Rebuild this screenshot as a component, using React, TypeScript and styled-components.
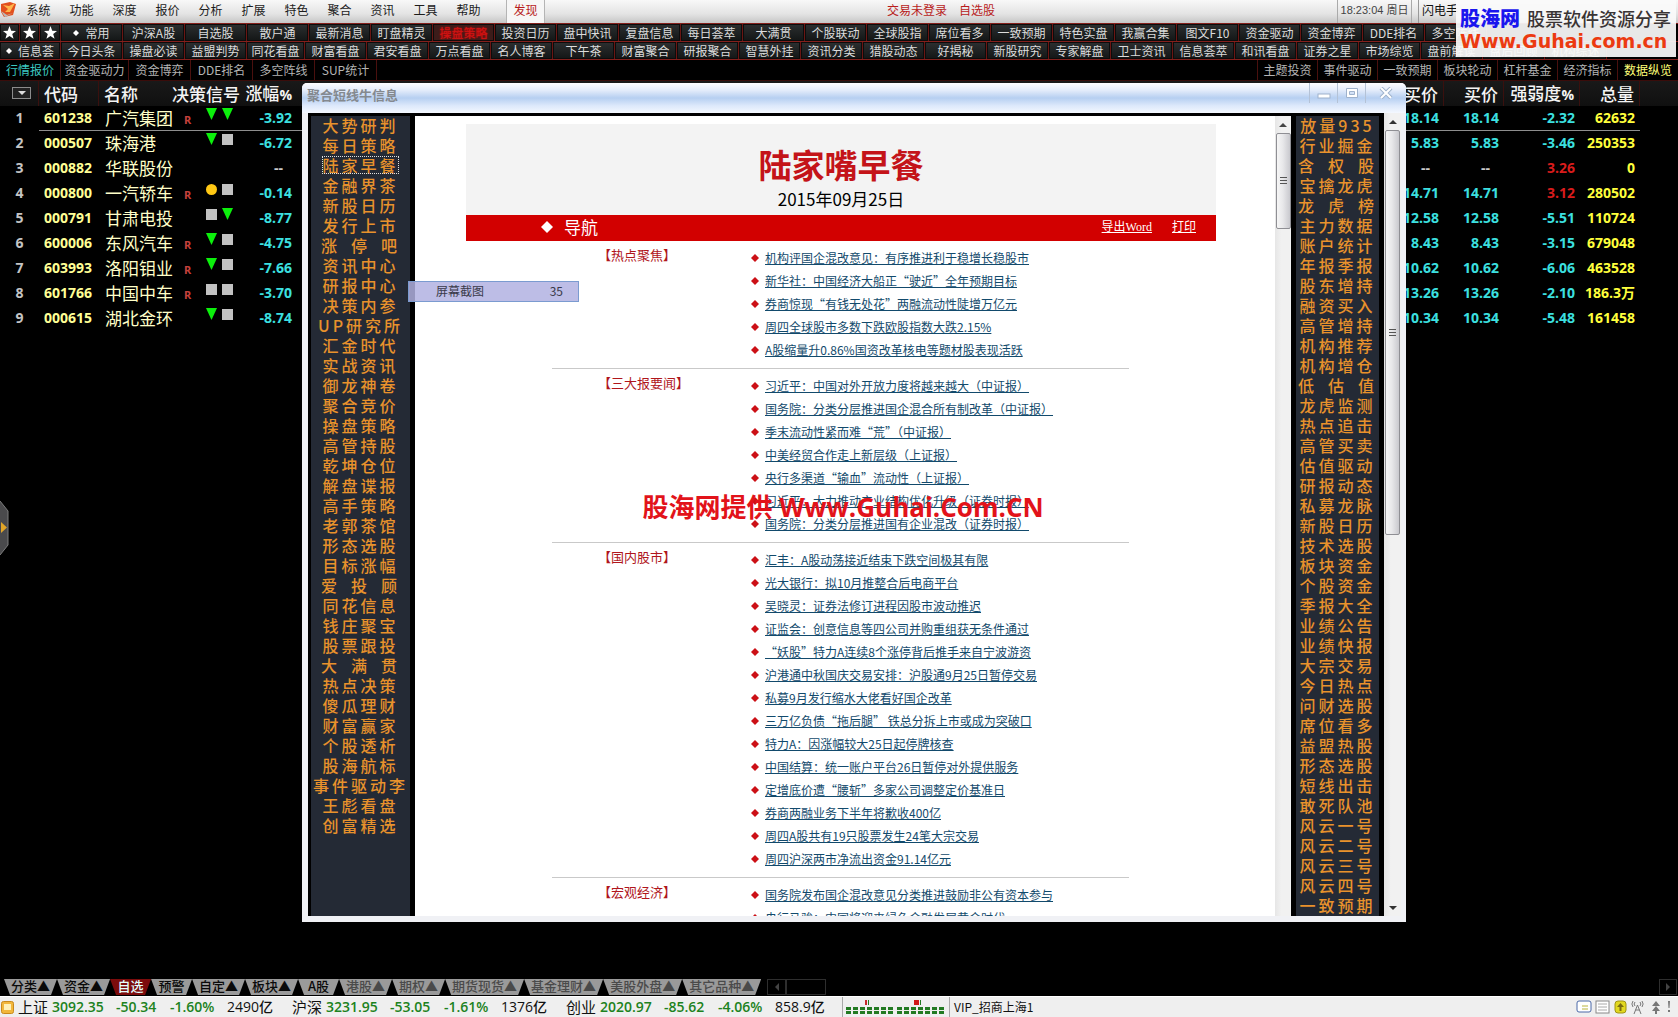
import React from "react";
import styled, { createGlobalStyle, css } from "styled-components";

const UI_FONT = '"Noto Sans CJK SC", "Liberation Sans", sans-serif';
const NUM_FONT = '"Open Sans", "Noto Sans CJK SC", sans-serif';

const GlobalStyle = createGlobalStyle`
  *, *::before, *::after { box-sizing: border-box; }
  body { margin: 0; background: #000; font-family: ${UI_FONT}; font-size: 12px; }
  button { margin: 0; padding: 0; border: 0; background: none; color: inherit; font: inherit; cursor: pointer; white-space: nowrap; }
  ul { list-style: none; margin: 0; padding: 0; }
  h1, h2, p { margin: 0; font-weight: 400; }
`;

const Page = styled.div`
  position: relative;
  display: flex;
  flex-direction: column;
  height: 100vh;
  min-width: 1280px;
  overflow: hidden;
  background: #000;
`;

/* ---------- top menu ---------- */

const MenuBar = styled.header`
  display: flex;
  align-items: stretch;
  height: 23px;
  flex: none;
  background: linear-gradient(#f8f8f8, #e4e4e4 60%, #c6c6c6);
  color: #1c1c1c;
`;
const AppIcon = styled.svg`
  width: 17px;
  height: 20px;
  flex: none;
`;
const MenuItem = styled.button`
  width: 43px;
  line-height: 18px;
  padding-bottom: 3px;
`;
const Discover = styled.button`
  width: 39px;
  margin-left: 16px;
  padding-bottom: 3px;
  line-height: 18px;
  color: #b81c1c;
  background: #f6f6f6;
  border: solid #b4b4b4;
  border-width: 0 1px;
`;
const AccountInfo = styled.div`
  flex: 1;
  display: flex;
  justify-content: center;
  gap: 12px;
  line-height: 20px;
  color: #b81c1c;
`;
const Clock = styled.time`
  width: 75px;
  border: solid #aaa;
  border-width: 0 1px;
  text-align: center;
  line-height: 20px;
  font-size: 11px;
  font-family: "Liberation Sans", "Noto Sans CJK SC", sans-serif;
  color: #444;
  white-space: nowrap;
`;
const QuickTrade = styled.button`
  width: 260px;
  margin-left: 6px;
  padding: 0 0 3px 3px;
  border-left: 1px solid #999;
  line-height: 18px;
  text-align: left;
  color: #111;
`;

/* ---------- toolbars ---------- */

const ToolRow = styled.nav`
  display: flex;
  flex: none;
  height: 18px;
  overflow: hidden;
  border-top: 1px solid #84201c;
  background: #000;
`;
const ToolCell = styled.button<{ $w?: number; $hot?: boolean }>`
  display: flex;
  align-items: center;
  justify-content: center;
  gap: 6px;
  flex: none;
  width: ${(p) => p.$w ?? 62}px;
  height: 17px;
  line-height: 17px;
  color: #dcdcdc;
  background: linear-gradient(#2c2f30, #131616);
  border: solid #6a1613;
  border-width: 0 1px 0 0;
  box-shadow: inset 0 0 0 1px #0c0c0c;
  ${(p) =>
    p.$hot &&
    css`
      color: #d01414;
      background: #3c1c1a;
      text-shadow: 0 0 2px #f00;
    `}
`;
const TabStrip = styled.div`
  display: flex;
  justify-content: space-between;
  flex: none;
  height: 22px;
  border-top: 1px solid #84201c;
  border-bottom: 1px solid #3a0c0a;
`;
const TabGroup = styled.nav<{ $end?: boolean }>`
  display: flex;
  ${(p) => p.$end && "border-left: 1px solid #4a100e;"}
`;
const StripTab = styled.button<{ $w: number; $color?: string }>`
  width: ${(p) => p.$w}px;
  line-height: 20px;
  color: ${(p) => p.$color ?? "#b4b4b4"};
  border-right: 1px solid #4a100e;
  &:last-child { border-right-width: ${(p) => (p.$color ? 0 : 1)}px; }
`;

/* ---------- quote table ---------- */

const Main = styled.main`
  position: relative;
  flex: 1;
  min-height: 0;
`;
const Quotes = styled.table`
  width: 100%;
  table-layout: fixed;
  border-collapse: separate;
  border-spacing: 0;
`;
const Head = styled.th<{ $align?: string; $line?: boolean }>`
  height: 25px;
  padding: 0 5px;
  background: linear-gradient(#191919, #101010);
  border-right: ${(p) => (p.$line ? "1px solid #3a100e" : "0")};
  font: 500 17px/24px ${UI_FONT};
  color: #f4f4f4;
  text-align: ${(p) => p.$align ?? "left"};
  white-space: nowrap;
`;
const Percent = styled.span`
  font: 700 14px/22px ${NUM_FONT};
`;
const SortButton = styled.button`
  display: flex;
  align-items: center;
  justify-content: center;
  width: 19px;
  height: 12px;
  margin: 0 0 2px 7px;
  border: 1px solid #8c8c8c;
  background: #222;
`;
const QuoteRow = styled.tr<{ $selected?: boolean }>`
  height: 25px;
  td { border-bottom: 1px solid transparent; }
  ${(p) => p.$selected && "td:not(:first-child):not(:last-child) { border-bottom-color: #8e8e8e; }"}
`;
const Cell = styled.td<{ $color: string; $align?: string; $empty?: boolean }>`
  padding: 0 ${(p) => (p.$empty ? 14 : 5)}px 0 5px;
  height: 25px;
  font: 700 14px/24px ${NUM_FONT};
  color: ${(p) => p.$color};
  text-align: ${(p) => p.$align ?? "left"};
  white-space: nowrap;
`;
const NameCell = styled(Cell)`
  padding-left: 6px;
  font: 400 17px/24px ${UI_FONT};
`;
const Signals = styled.div`
  display: flex;
  gap: 5px;
  padding-left: 7px;
  height: 24px;
`;
const Mark = styled.span`
  width: 17px;
  padding-top: 4px;
  font: 700 11px/20px ${NUM_FONT};
  color: #c8403c;
`;
const SignalIcon = styled.svg`
  width: 11px;
  height: 12px;
  margin-top: 2px;
`;

/* ---------- floating window ---------- */

const Window = styled.section`
  position: absolute;
  top: 2px;
  left: 302px;
  right: 272px;
  bottom: 56px;
  display: flex;
  flex-direction: column;
  padding: 0 5px 6px 6px;
  border-radius: 5px 5px 0 0;
  background: #f0f1f5;
`;
const TitleBar = styled.header`
  display: flex;
  justify-content: space-between;
  flex: none;
  height: 30px;
  margin: 0 -5px 0 -6px;
  padding: 0 0 0 5px;
  border-radius: 5px 5px 0 0;
  background: linear-gradient(#fdfdff, #e2ebfa 25%, #b6cff1 50%, #dce8fb 75%, #f4f8ff);
`;
const WindowTitle = styled.h2`
  font: 700 13px/24px ${UI_FONT};
  color: #84898f;
`;
const WindowButtons = styled.div`
  display: flex;
`;
const WindowButton = styled.button`
  display: flex;
  align-items: center;
  justify-content: center;
  width: 28px;
  height: 20px;
  border-left: 1px solid #b4c2d6;
  &:last-child { width: 41px; }
`;
const WindowBody = styled.div`
  display: flex;
  flex: 1;
  min-height: 0;
`;
const Frames = styled.div`
  display: flex;
  flex: 1;
  min-width: 0;
  padding-top: 3px;
  background: #000;
`;
const SideMenu = styled.ul<{ $w: number; $side: "left" | "right" }>`
  flex: none;
  width: ${(p) => p.$w}px;
  margin: ${(p) => (p.$side === "left" ? "0 5px 0 3px" : "0 5px")};
  background: #242a35;
  text-align: center;
  overflow: hidden;
`;
const SideItem = styled.li`
  height: 20px;
  white-space: nowrap;
`;
const SideLink = styled.a<{ $focused?: boolean }>`
  display: inline-block;
  height: 18px;
  color: #e8922c;
  font-size: 16px;
  font-weight: 500;
  line-height: 18px;
  letter-spacing: 3px;
  text-decoration: none;
  ${(p) => p.$focused && "outline: 1px dotted #e0e0e0; outline-offset: -1px;"}
`;
const Reader = styled.div`
  display: flex;
  flex: 1;
  min-width: 0;
  background: #fff;
`;
const Document = styled.article`
  flex: 1;
  padding: 8px 8px 0 0;
  overflow: hidden;
`;
const Sheet = styled.div`
  width: 750px;
  margin: 0 auto;
`;
const Masthead = styled.header`
  height: 91px;
  padding-top: 20px;
  background: #f3f3f3;
  text-align: center;
`;
const Headline = styled.h1`
  font: 700 33px/40px ${UI_FONT};
  color: #c41419;
`;
const IssueDate = styled.p`
  font-size: 17px;
  line-height: 30px;
  color: #000;
`;
const NavBand = styled.div`
  display: flex;
  align-items: center;
  height: 26px;
  padding: 0 20px 2px 75px;
  background: #d20000;
  color: #fff;
`;
const NavTitle = styled.span`
  display: flex;
  align-items: center;
  gap: 11px;
  flex: 1;
  font-size: 17px;
  line-height: 24px;
`;
const NavLinks = styled.span`
  display: flex;
  gap: 20px;
`;
const NavLink = styled.a`
  color: #fff;
  font-family: "Liberation Serif", "Noto Sans CJK SC", serif;
  line-height: 24px;
`;
const NewsSection = styled.section`
  display: grid;
  grid-template-columns: 199px 1fr;
  margin: 0 87px 0 86px;
  padding: 6px 0;
  border-bottom: 1px solid #c9c9c9;
`;
const SectionLabel = styled.h2`
  padding-left: 46px;
  font: 400 13px/15px ${UI_FONT};
  color: #b0161c;
`;
const NewsItem = styled.li`
  display: flex;
  align-items: center;
  gap: 6px;
  height: 23px;
  padding-bottom: 2px;
  white-space: nowrap;
`;
const NewsLink = styled.a`
  color: #124a6c;
  line-height: 20px;
  text-underline-offset: 1px;
`;

/* ---------- scroll bars ---------- */

const Track = styled.div<{ $w: number }>`
  display: flex;
  flex-direction: column;
  align-items: center;
  flex: none;
  width: ${(p) => p.$w}px;
  background: linear-gradient(90deg, #e6e6e6, #f1f1f1 40%);
`;
const TrackButton = styled.button`
  display: flex;
  align-items: center;
  justify-content: center;
  width: 100%;
  height: 17px;
`;
const Thumb = styled.div<{ $h: string }>`
  display: flex;
  align-items: center;
  justify-content: center;
  width: 15px;
  height: ${(p) => p.$h};
  border: 1px solid #8f8f94;
  border-radius: 2px;
  background: linear-gradient(90deg, #f6f6f6, #e8e8ea 45%, #c9c9ce);
`;
const Grip = styled.span`
  width: 7px;
  height: 8px;
  background: repeating-linear-gradient(#555 0 1px, transparent 1px 3px);
`;
const TrackSpace = styled.span`
  flex: 1;
`;

/* ---------- overlays ---------- */

const CaptureHint = styled.div`
  position: absolute;
  top: 200px;
  left: 408px;
  display: flex;
  justify-content: space-between;
  width: 171px;
  height: 21px;
  padding: 0 15px 0 27px;
  border: 1px solid #7b9bd0;
  background: rgba(178, 178, 226, 0.85);
  line-height: 18px;
  color: #3a3a4a;
`;
const CenterMark = styled.p`
  position: absolute;
  top: 408px;
  left: 0;
  right: 0;
  padding-left: 8px;
  text-align: center;
  font: 700 26px/36px ${NUM_FONT};
  color: #e2131a;
`;
const CornerMark = styled.aside`
  position: absolute;
  top: 0;
  right: 2px;
  width: 220px;
  height: 57px;
  padding: 6px 0 0 4px;
  background: rgba(250, 250, 250, 0.93);
`;
const CornerRow = styled.div`
  display: flex;
  align-items: center;
  gap: 7px;
  height: 23px;
  white-space: nowrap;
`;
const CornerName = styled.strong`
  font: 900 20px/24px ${UI_FONT};
  color: #1a16ee;
`;
const CornerSlogan = styled.span`
  font: 500 18px/24px ${UI_FONT};
  color: #3a3434;
`;
const CornerSite = styled.strong`
  display: block;
  font: 700 19px/24px "DejaVu Sans", sans-serif;
  color: #ec3a10;
`;
const SideHandle = styled.button`
  position: absolute;
  left: 0;
  top: 420px;
  width: 9px;
  height: 54px;
  svg { display: block; }
`;

/* ---------- bottom bars ---------- */

const BottomTabs = styled.nav`
  display: flex;
  align-items: center;
  flex: none;
  height: 18px;
  padding: 0 1px 0 4px;
`;
const BottomTab = styled.button<{ $tone: "normal" | "dim" | "active" }>`
  height: 16px;
  min-width: 41px;
  padding: 0 7px 2px;
  font: 500 13px/14px ${UI_FONT};
  clip-path: polygon(0 0, 100% 0, calc(100% - 6px) 100%, 6px 100%);
  color: ${(p) => ({ normal: "#0a0a0a", dim: "#4a4a4a", active: "#e4ffff" })[p.$tone]};
  background: ${(p) => (p.$tone === "active" ? "#7c0c0c" : "#9a9a9a")};
`;
const ScrollBox = styled.button<{ $w: number }>`
  display: flex;
  align-items: center;
  justify-content: center;
  width: ${(p) => p.$w}px;
  height: 16px;
  border: 1px solid #2e2e2e;
`;
const BoxGroup = styled.div`
  display: flex;
  flex: 1;
  margin-left: 6px;
`;
const StatusBar = styled.footer`
  display: flex;
  align-items: center;
  flex: none;
  height: 21px;
  border-top: 1px solid #fff;
  background: #efefef;
  color: #111;
`;
const StatusIcon = styled.svg`
  width: 18px;
  height: 20px;
  flex: none;
`;
const IndexGroup = styled.div`
  display: grid;
  grid-template-columns: 34px 64px 54px 57px 65px;
  flex: none;
  font: 600 14px/20px ${NUM_FONT};
  white-space: nowrap;
`;
const IndexName = styled.span`
  font: 400 15px/20px ${UI_FONT};
`;
const Amount = styled.span`
  font: 500 14px/20px ${NUM_FONT};
`;
const Down = styled.span`
  color: #1c8220;
`;
const Breadth = styled.div`
  display: flex;
  align-items: center;
  height: 20px;
  padding: 0 3px;
  margin-left: 2px;
  border: solid #a8a8a8;
  border-width: 0 1px;
`;
const Server = styled.span`
  flex: 1;
  padding-left: 4px;
  font-size: 12px;
  line-height: 18px;
`;
const Tray = styled.svg`
  flex: none;
  width: 102px;
  height: 20px;
`;

/* ---------- data ---------- */

const menus = "系统 功能 深度 报价 分析 扩展 特色 聚合 资讯 工具 帮助".split(" ");
const toolsTop = "沪深A股 自选股 散户通 最新消息 盯盘精灵 操盘策略 投资日历 盘中快讯 复盘信息 每日荟萃 大满贯 个股联动 全球股指 席位看多 一致预期 特色实盘 我赢合集 图文F10 资金驱动 资金博弈 DDE排名 多空阵线".split(" ");
const toolsBottom = "今日头条 操盘必读 益盟判势 同花看盘 财富看盘 君安看盘 万点看盘 名人博客 下午茶 财富聚合 研报聚合 智慧外挂 资讯分类 猎股动态 好揭秘 新股研究 专家解盘 卫士资讯 信息荟萃 和讯看盘 证券之星 市场综览 盘前解读 盘后回顾 机构综述".split(" ");
const stripLeft: [string, number][] = [["行情报价", 61], ["资金驱动力", 68], ["资金博弈", 62], ["DDE排名", 62], ["多空阵线", 62], ["SUP统计", 62]];
const stripRight = "主题投资 事件驱动 一致预期 板块轮动 杠杆基金 经济指标 数据纵览".split(" ");

type Sig = "down" | "flat" | "hold" | "none";
type Quote = [string, string, boolean, Sig, Sig, string, string, string, string];
const quotes: Quote[] = [
  ["601238", "广汽集团", true, "down", "down", "-3.92", "18.14", "-2.32", "62632"],
  ["000507", "珠海港", false, "down", "flat", "-6.72", "5.83", "-3.46", "250353"],
  ["000882", "华联股份", false, "none", "none", "--", "--", "3.26", "0"],
  ["000800", "一汽轿车", true, "hold", "flat", "-0.14", "14.71", "3.12", "280502"],
  ["000791", "甘肃电投", false, "flat", "down", "-8.77", "12.58", "-5.51", "110724"],
  ["600006", "东风汽车", true, "down", "flat", "-4.75", "8.43", "-3.15", "679048"],
  ["603993", "洛阳钼业", true, "down", "flat", "-7.66", "10.62", "-6.06", "463528"],
  ["601766", "中国中车", true, "flat", "flat", "-3.70", "13.26", "-2.10", "186.3万"],
  ["000615", "湖北金环", false, "down", "flat", "-8.74", "10.34", "-5.48", "161458"],
];

const sideLeft = "大势研判 每日策略 陆家早餐 金融界茶 新股日历 发行上市 涨_停_吧 资讯中心 研报中心 决策内参 UP研究所 汇金时代 实战资讯 御龙神卷 聚合竞价 操盘策略 高管持股 乾坤仓位 解盘谍报 高手策略 老郭茶馆 形态选股 目标涨幅 爱_投_顾 同花信息 钱庄聚宝 股票跟投 大_满_贯 热点决策 傻瓜理财 财富赢家 个股透析 股海航标 事件驱动李 王彪看盘 创富精选".split(" ");
const sideRight = "放量935 行业掘金 含_权_股 宝擒龙虎 龙_虎_榜 主力数据 账户统计 年报季报 股东增持 融资买入 高管增持 机构推荐 机构增仓 低_估_值 龙虎监测 热点追击 高管买卖 估值驱动 研报动态 私募龙脉 新股日历 技术选股 板块资金 个股资金 季报大全 业绩公告 业绩快报 大宗交易 今日热点 问财选股 席位看多 益盟热股 形态选股 短线出击 敢死队池 风云一号 风云二号 风云三号 风云四号 一致预期".split(" ");

const news: { label: string; items: string[] }[] = [
  {
    label: "【热点聚焦】",
    items: [
      "机构评国企混改意见：有序推进利于稳增长稳股市",
      "新华社：中国经济大船正“驶近”全年预期目标",
      "券商惊现“有钱无处花”两融流动性陡增万亿元",
      "周四全球股市多数下跌欧股指数大跌2.15%",
      "A股缩量升0.86%国资改革核电等题材股表现活跃",
    ],
  },
  {
    label: "【三大报要闻】",
    items: [
      "习近平：中国对外开放力度将越来越大（中证报）",
      "国务院：分类分层推进国企混合所有制改革（中证报）",
      "季末流动性紧而难“荒”（中证报）",
      "中美经贸合作走上新层级（上证报）",
      "央行多渠道“输血”流动性（上证报）",
      "习近平：大力推动产业结构优化升级（证券时报）",
      "国务院：分类分层推进国有企业混改（证券时报）",
    ],
  },
  {
    label: "【国内股市】",
    items: [
      "汇丰：A股动荡接近结束下跌空间极其有限",
      "光大银行：拟10月推整合后电商平台",
      "吴晓灵：证券法修订进程因股市波动推迟",
      "证监会：创意信息等四公司并购重组获无条件通过",
      "“妖股”特力A连续8个涨停背后推手来自宁波游资",
      "沪港通中秋国庆交易安排：沪股通9月25日暂停交易",
      "私募9月发行缩水大佬看好国企改革",
      "三万亿负债“拖后腿” 铁总分拆上市或成为突破口",
      "特力A：因涨幅较大25日起停牌核查",
      "中国结算：统一账户平台26日暂停对外提供服务",
      "定增底价遭“腰斩”多家公司调整定价基准日",
      "券商两融业务下半年将歉收400亿",
      "周四A股共有19只股票发生24笔大宗交易",
      "周四沪深两市净流出资金91.14亿元",
    ],
  },
  {
    label: "【宏观经济】",
    items: ["国务院发布国企混改意见分类推进鼓励非公有资本参与", "央行马骏：中国将迎来绿色金融发展黄金时代"],
  },
];

type Tone = "normal" | "dim" | "active";
const bottomTabs: [string, Tone][] = [
  ["分类▲", "normal"], ["资金▲", "normal"], ["自选", "active"], ["预警", "normal"], ["自定▲", "normal"], ["板块▲", "normal"], ["A股", "normal"],
  ["港股▲", "dim"], ["期权▲", "dim"], ["期货现货▲", "dim"], ["基金理财▲", "dim"], ["美股外盘▲", "dim"], ["其它品种▲", "dim"],
];
const indices = [
  ["上证", "3092.35", "-50.34", "-1.60%", "2490亿"],
  ["沪深", "3231.95", "-53.05", "-1.61%", "1376亿"],
  ["创业", "2020.97", "-85.62", "-4.06%", "858.9亿"],
];

/* ---------- small parts ---------- */

const Diamond = ({ size, color }: { size: number; color: string }) => (
  <svg width={size} height={size} viewBox="0 0 10 10" aria-hidden="true">
    <path d="M5 0 10 5 5 10 0 5Z" fill={color} />
  </svg>
);
const Star = () => (
  <svg width="13" height="13" viewBox="0 0 24 24" aria-hidden="true">
    <path d="M12 0l3.2 8.6 8.8.4-7 5.6 2.5 9L12 18.400l-7.500 5.200 2.500-9L0 9l8.800-.4Z" fill="#fff" />
  </svg>
);
const Arrow = ({ d, color }: { d: string; color: string }) => (
  <svg width="8" height="8" viewBox="0 0 8 8" aria-hidden="true">
    <path d={d} fill={color} />
  </svg>
);
const UP = "M0 6 4 2 8 6Z";
const DOWN = "M0 2 4 6 8 2Z";
const LEFT = "M6 0 2 4 6 8Z";
const RIGHT = "M2 0 6 4 2 8Z";

const Signal = ({ kind }: { kind: Sig }) => (
  <SignalIcon viewBox="0 0 11 12" aria-hidden="true">
    {kind === "down" && <path d="M0 0H11L5.500 12Z" fill="#0cf00c" />}
    {kind === "flat" && <rect y="1" width="11" height="11" fill="#c2c2c2" />}
    {kind === "hold" && <circle cx="5.500" cy="6.500" r="5.500" fill="#ffc814" />}
  </SignalIcon>
);

const SideList = ({ items, width, side, focused }: { items: string[]; width: number; side: "left" | "right"; focused?: string }) => (
  <SideMenu $w={width} $side={side}>
    {items.map((t, i) => (
      <SideItem key={i}>
        <SideLink href="#" $focused={t === focused}>{t.replace(/_/g, "\u2002")}</SideLink>
      </SideItem>
    ))}
  </SideMenu>
);

const quoteColor = (v: string) => (v === "--" ? "#c8c8c8" : v.startsWith("-") ? "#3ce0e0" : "#d81c1c");

const BidCell = ({ value }: { value: string }) => (
  <Cell $color={value === "--" ? "#c8c8c8" : "#3ce0e0"} $align="right" $empty={value === "--"}>{value}</Cell>
);

export default function App() {
  return (
    <Page>
      <GlobalStyle />
      <MenuBar>
        <AppIcon viewBox="0 0 17 20" aria-hidden="true">
          <path d="M1 4 10 2 16 4 13 15 4 17 1 12Z" fill="#e2501e" />
          <path d="M3 5 9 6 15 3 10 12 5 12 8 9Z" fill="#ffb64c" />
          <path d="M1 11 7 15 13 13 5 17Z" fill="#b9b9b9" />
        </AppIcon>
        {menus.map((m) => <MenuItem key={m}>{m}</MenuItem>)}
        <Discover>发现</Discover>
        <AccountInfo><span>交易未登录</span><span>自选股</span></AccountInfo>
        <Clock>18:23:04 周日</Clock>
        <QuickTrade>闪电手</QuickTrade>
      </MenuBar>

      <ToolRow aria-label="常用">
        <ToolCell $w={20} aria-label="收藏一"><Star /></ToolCell>
        <ToolCell $w={20} aria-label="收藏二"><Star /></ToolCell>
        <ToolCell $w={21} aria-label="收藏三"><Star /></ToolCell>
        <ToolCell><Diamond size={6} color="#fff" />常用</ToolCell>
        {toolsTop.map((t) => <ToolCell key={t} $hot={t === "操盘策略"}>{t}</ToolCell>)}
      </ToolRow>
      <ToolRow aria-label="信息荟">
        <ToolCell $w={61}><Diamond size={6} color="#fff" />信息荟</ToolCell>
        {toolsBottom.map((t) => <ToolCell key={t} $w={t === "同花看盘" ? 58 : 62}>{t}</ToolCell>)}
      </ToolRow>
      <TabStrip>
        <TabGroup>
          {stripLeft.map(([t, w], i) => (
            <StripTab key={t} $w={w} $color={i === 0 ? "#3cc8c0" : undefined}>{t}</StripTab>
          ))}
        </TabGroup>
        <TabGroup $end>
          {stripRight.map((t, i) => (
            <StripTab key={t} $w={60} $color={i === 6 ? "#ffff78" : undefined}>{t}</StripTab>
          ))}
        </TabGroup>
      </TabStrip>

      <Main>
        <Quotes>
          <colgroup>
            <col style={{ width: 39 }} /><col style={{ width: 60 }} /><col style={{ width: 73 }} />
            <col style={{ width: 68 }} /><col style={{ width: 57 }} /><col />
            <col style={{ width: 74 }} /><col style={{ width: 60 }} /><col style={{ width: 76 }} />
            <col style={{ width: 60 }} /><col style={{ width: 38 }} />
          </colgroup>
          <thead>
            <tr>
              <Head $line><SortButton aria-label="排序"><Arrow d={DOWN} color="#ddd" /></SortButton></Head>
              <Head $line>代码</Head>
              <Head>名称</Head>
              <Head style={{ padding: 0 }}>决策信号</Head>
              <Head $align="right">涨幅<Percent>%</Percent></Head>
              <Head />
              <Head $align="right" $line>买价</Head>
              <Head $align="right" $line>买价</Head>
              <Head $align="right" $line>强弱度<Percent>%</Percent></Head>
              <Head $align="right" $line>总量</Head>
              <Head />
            </tr>
          </thead>
          <tbody>
            {quotes.map(([code, name, r, s1, s2, chg, bid, power, vol], i) => (
              <QuoteRow key={code} $selected={i === 0}>
                <Cell $color="#c4c4c4" $align="center">{i + 1}</Cell>
                <Cell $color="#ffff96">{code}</Cell>
                <NameCell $color="#ffffc8">{name}</NameCell>
                <Cell $color="#c8403c">
                  <Signals><Mark>{r ? "R" : ""}</Mark><Signal kind={s1} /><Signal kind={s2} /></Signals>
                </Cell>
                <Cell $color={quoteColor(chg)} $align="right" $empty={chg === "--"}>{chg}</Cell>
                <Cell $color="#fff" />
                <BidCell value={bid} />
                <BidCell value={bid} />
                <Cell $color={quoteColor(power)} $align="right">{power}</Cell>
                <Cell $color="#ffff3c" $align="right">{vol}</Cell>
                <Cell $color="#fff" />
              </QuoteRow>
            ))}
          </tbody>
        </Quotes>

        <SideHandle aria-label="展开侧栏">
          <svg width="9" height="54" viewBox="0 0 9 54">
            <path d="M0 0 8 10V44L0 54Z" fill="#4a4a4c" />
            <path d="M0 0 8 10V44L0 54" fill="none" stroke="#7c7c7c" />
            <path d="M1 21 7 26.500 1 32Z" fill="#e2a628" />
          </svg>
        </SideHandle>

        <Window>
          <TitleBar>
            <WindowTitle>聚合短线牛信息</WindowTitle>
            <WindowButtons>
              <WindowButton aria-label="最小化">
                <svg width="14" height="12"><rect x="1" y="7" width="12" height="4" fill="#fff" stroke="#9fb2cc" /></svg>
              </WindowButton>
              <WindowButton aria-label="最大化">
                <svg width="14" height="12"><path d="M1.500 1.500h11v9h-11ZM4.500 4.500h5v3h-5Z" fill="#fff" fillRule="evenodd" stroke="#9fb2cc" /></svg>
              </WindowButton>
              <WindowButton aria-label="关闭">
                <svg width="14" height="12">
                  <path d="M2 1 12 11M12 1 2 11" stroke="#9fb2cc" strokeWidth="4" />
                  <path d="M2 1 12 11M12 1 2 11" stroke="#fff" strokeWidth="2" />
                </svg>
              </WindowButton>
            </WindowButtons>
          </TitleBar>
          <WindowBody>
            <Frames>
              <SideList items={sideLeft} width={99} side="left" focused="陆家早餐" />
              <Reader>
                <Document>
                  <Sheet>
                    <Masthead>
                      <Headline>陆家嘴早餐</Headline>
                      <IssueDate>2015年09月25日</IssueDate>
                    </Masthead>
                    <NavBand>
                      <NavTitle><Diamond size={12} color="#fff" />导航</NavTitle>
                      <NavLinks><NavLink href="#">导出Word</NavLink><NavLink href="#">打印</NavLink></NavLinks>
                    </NavBand>
                    {news.map((s) => (
                      <NewsSection key={s.label}>
                        <SectionLabel>{s.label}</SectionLabel>
                        <ul>
                          {s.items.map((t) => (
                            <NewsItem key={t}><Diamond size={8} color="#cc1016" /><NewsLink href="#">{t}</NewsLink></NewsItem>
                          ))}
                        </ul>
                      </NewsSection>
                    ))}
                  </Sheet>
                </Document>
                <Track $w={16}>
                  <TrackButton aria-label="向上"><Arrow d={UP} color="#444" /></TrackButton>
                  <Thumb $h="96px"><Grip /></Thumb>
                </Track>
              </Reader>
              <SideList items={sideRight} width={83} side="right" />
            </Frames>
            <Track $w={17}>
              <TrackButton aria-label="向上"><Arrow d={UP} color="#333" /></TrackButton>
              <Thumb $h="405px"><Grip /></Thumb>
              <TrackSpace />
              <TrackButton aria-label="向下"><Arrow d={DOWN} color="#333" /></TrackButton>
            </Track>
          </WindowBody>
        </Window>

        <CaptureHint><span>屏幕截图</span><span>35</span></CaptureHint>
        <CenterMark>股海网提供 Www.Guhai.Com.CN</CenterMark>
      </Main>

      <BottomTabs>
        {bottomTabs.map(([t, tone]) => <BottomTab key={t} $tone={tone}>{t}</BottomTab>)}
        <BoxGroup>
          <ScrollBox $w={19} aria-label="向左"><Arrow d={LEFT} color="#444" /></ScrollBox>
          <ScrollBox $w={40} aria-label="滚动条" />
        </BoxGroup>
        <ScrollBox $w={18} aria-label="向右"><Arrow d={RIGHT} color="#444" /></ScrollBox>
      </BottomTabs>

      <StatusBar>
        <StatusIcon viewBox="0 0 18 20" aria-hidden="true">
          <rect x="1.500" y="4.500" width="12" height="12" rx="2" fill="#f2b73c" stroke="#c98a1c" />
          <rect x="4" y="7" width="7" height="6" fill="#fff1b8" />
        </StatusIcon>
        {indices.map(([name, price, delta, pct, amount]) => (
          <IndexGroup key={name}>
            <IndexName>{name}</IndexName><Down>{price}</Down><Down>{delta}</Down><Down>{pct}</Down><Amount>{amount}</Amount>
          </IndexGroup>
        ))}
        <Breadth>
          <svg width="100" height="18" viewBox="0 0 100 18" aria-hidden="true">
            {[0, 51].map((x) =>
              [0, 1, 2, 3, 4, 5, 6].map((n) => (
                <g key={`${x}-${n}`}>
                  <rect x={x + n * 7} y="9" width="5" height="3" fill="#227a22" />
                  <rect x={x + n * 7} y="13" width="5" height="3" fill="#227a22" />
                </g>
              ))
            )}
            <rect x="19" y="2" width="2" height="5" fill="#c42a2a" />
            <rect x="22" y="2" width="1" height="5" fill="#227a22" />
            <rect x="68" y="2" width="5" height="5" fill="#d01818" />
            <rect x="74" y="2" width="1" height="5" fill="#227a22" />
          </svg>
        </Breadth>
        <Server>VIP_招商上海1</Server>
        <Tray viewBox="0 0 102 20" aria-hidden="true">
          <rect x="1" y="4" width="14" height="11" rx="2" fill="#fff" stroke="#4a68a8" />
          <path d="M6 9h6M6 12h6" stroke="#b8b43c" />
          <rect x="20" y="4" width="13" height="12" fill="#fff" stroke="#888" />
          <path d="M22 7h9M22 10h9M22 13h9" stroke="#aaa" />
          <rect x="39" y="4" width="11" height="12" rx="3" fill="#e2d820" stroke="#a09414" />
          <path d="M44.500 6 48 10H45.500V14H43.500V10H41Z" fill="#7a6c10" />
          <path d="M57 4a5 5 0 0 0 0 6M66 4a5 5 0 0 1 0 6M59 5a3 3 0 0 0 0 4M64 5a3 3 0 0 1 0 4M61.500 8 58 17M61.500 8 65 17M59.500 13h4" fill="none" stroke="#777" />
          <path d="M76 9 80 4 84 9ZM76 14 80 9 84 14ZM79 14h2v3h-2Z" fill="#777" />
          <path d="M92 4h2l-.5 7h-1ZM92 13h2v2h-2Z" fill="#777" />
        </Tray>
      </StatusBar>

      <CornerMark>
        <CornerRow><CornerName>股海网</CornerName><CornerSlogan>股票软件资源分享</CornerSlogan></CornerRow>
        <CornerSite>Www.Guhai.com.cn</CornerSite>
      </CornerMark>
    </Page>
  );
}
